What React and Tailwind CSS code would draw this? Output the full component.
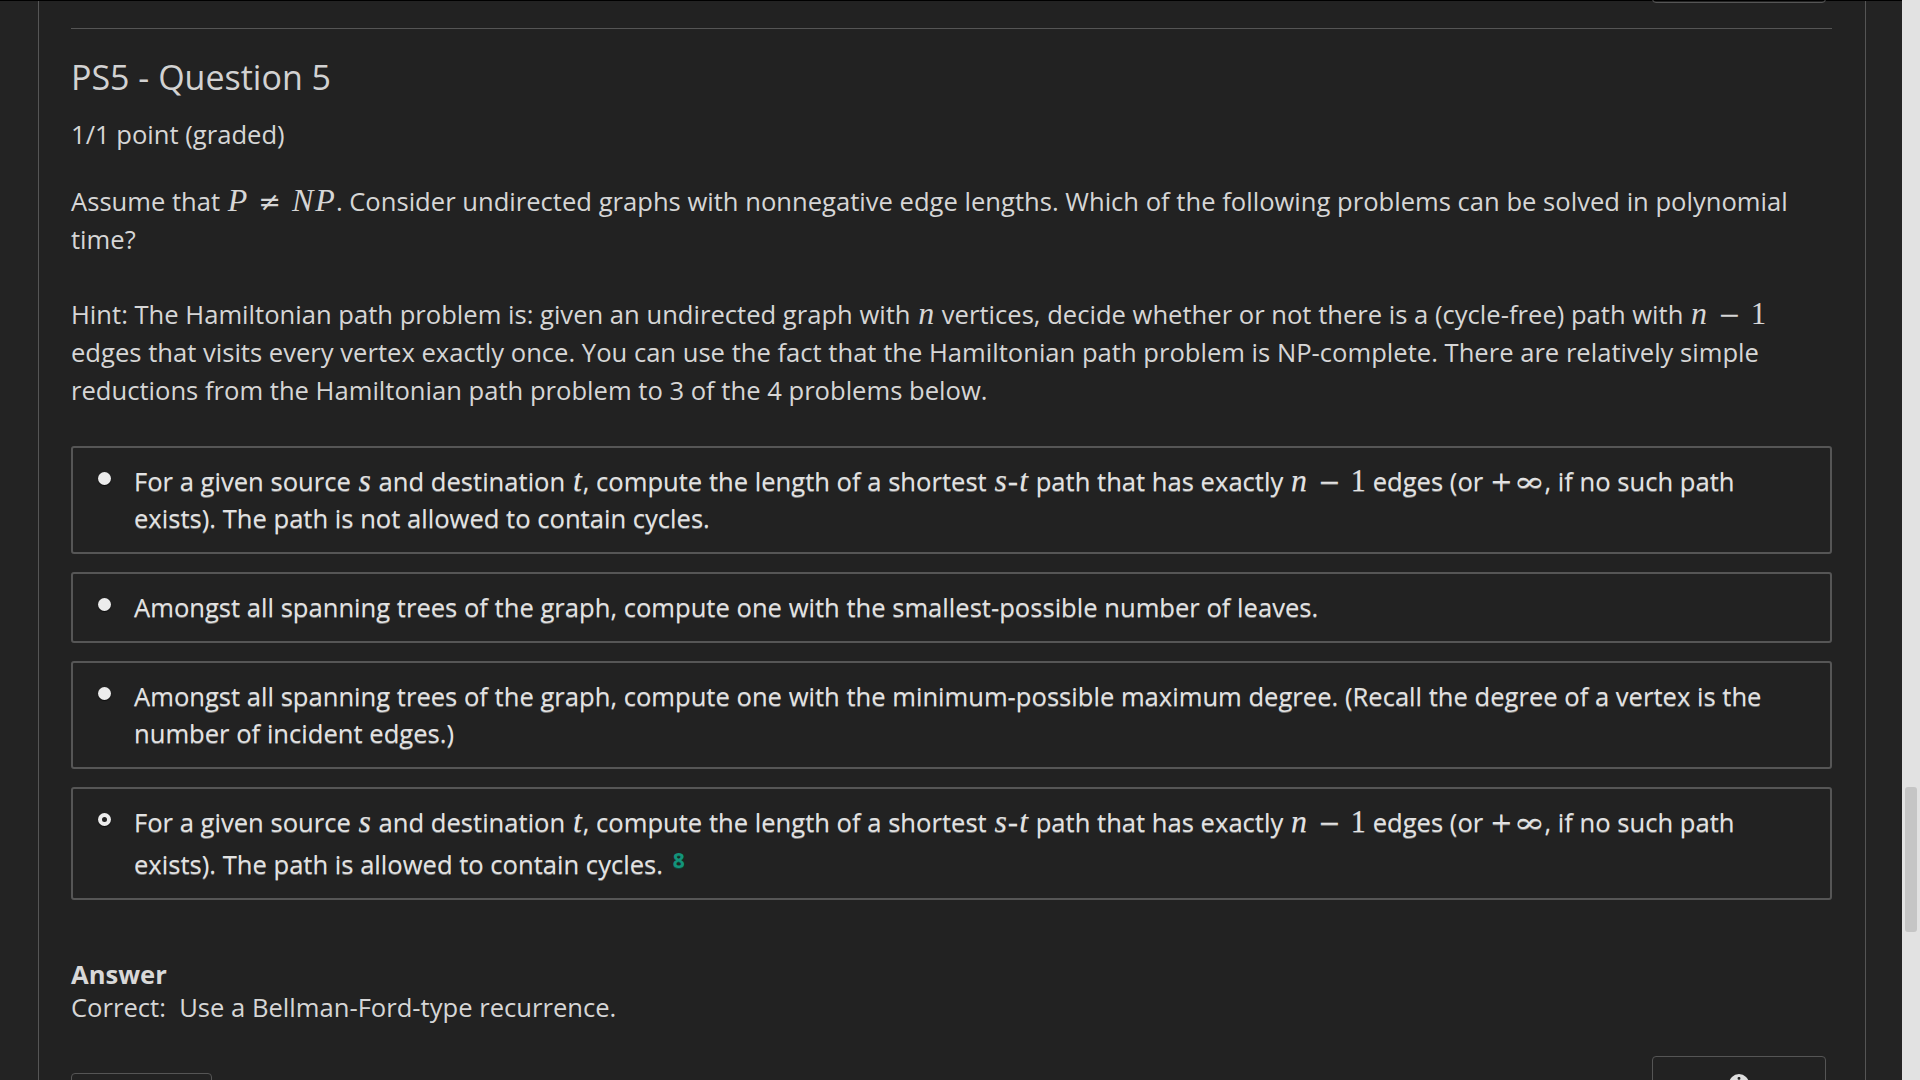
import clsx from 'clsx';

const serif = "font-['Liberation_Serif','DejaVu_Serif',serif]";
const opFont = "font-['DejaVu_Serif','Liberation_Serif',serif]";

// math italic letter(s)
function Mi({ children }) {
  return (
    <span className={clsx(serif, 'ml-[1px] -mr-[1px] italic text-[32px] leading-none tracking-[2px]')}>{children}</span>
  );
}

// upright math: digits and the hyphen
function Mu({ children }) {
  return <span className={clsx(serif, 'text-[31px] leading-none')}>{children}</span>;
}

function Op({ children, spaced }) {
  return (
    <span className={clsx(opFont, 'text-[27px] font-light leading-none', spaced && 'mx-[10px]')}>{children}</span>
  );
}

function PlusInf() {
  return (
    <span className={clsx(opFont, 'text-[27px] font-light leading-none')}>
      +<span className="ml-[1px] inline-block w-[31px] text-center">
        <span className="inline-block scale-x-[1.4]">∞</span>
      </span>
    </span>
  );
}

function Radio({ checked }) {
  return (
    <span className="mt-[9px] flex h-[13px] w-[13px] shrink-0 items-center justify-center rounded-full bg-[#ececec] shadow-[0_1px_1px_rgba(0,0,0,0.6)]">
      {checked && <span className="h-[5px] w-[5px] rounded-full bg-[#222]" />}
    </span>
  );
}

function Option({ checked, children }) {
  return (
    <div className="flex gap-[23px] rounded-[3px] border-2 border-[#565656] py-[15px] pl-[25px] pr-[24px]">
      <Radio checked={checked} />
      <div className="text-[25.6px] leading-[37px] text-[#e2e2e2] [text-shadow:0_1px_0_#7a7a7a]">{children}</div>
    </div>
  );
}

function ShortestPath() {
  return (
    <>
      For a given source <Mi>s</Mi> and destination <Mi>t</Mi>, compute the length of a shortest{' '}
      <Mi>s</Mi>
      <Mu>-</Mu>
      <Mi>t</Mi> path that has exactly <Mi>n</Mi>
      <Op spaced>−</Op>
      <Mu>1</Mu> edges (or <PlusInf />, if no such path exists).
    </>
  );
}

export default function App() {
  return (
    <div className="flex h-screen w-full overflow-hidden bg-[#222] font-['Open_Sans','Noto_Sans',sans-serif] text-[#d6d6d6]">
      <div className="flex-1 border-t border-black bg-[#232323]">
        <div className="ml-[38px] h-full w-[1828px] border-l border-r border-[#555] bg-[#222] pl-[32px] pr-[33px]">
          {/* button peeking in from the previous unit */}
          <div className="flex justify-end">
            <div className="-mt-[41px] mr-[6px] h-[43px] w-[174px] rounded-[4px] border border-[#555]" />
          </div>
          <div className="mt-[25px] border-t border-[#555]" />

          <h3 className="mt-[27px] text-[34px] font-normal leading-[42px] text-[#d2d2d2]">PS5 - Question 5</h3>
          <div className="mt-[18px] text-[25.6px] leading-[38px]">1/1 point (graded)</div>

          <p className="mt-[29px] text-[25.6px] leading-[38px]">
            Assume that <Mi>P</Mi>
            <Op spaced>≠</Op>
            <Mi>NP</Mi>. Consider undirected graphs with nonnegative edge lengths. Which of the following
            problems can be solved in polynomial time?
          </p>

          <p className="mt-[37px] text-[25.6px] leading-[38px]">
            Hint: The Hamiltonian path problem is: given an undirected graph with <Mi>n</Mi> vertices, decide
            whether or not there is a (cycle-free) path with <Mi>n</Mi>
            <Op spaced>−</Op>
            <Mu>1</Mu> edges that visits every vertex exactly once. You can use the fact that the Hamiltonian
            path problem is NP-complete. There are relatively simple reductions from the Hamiltonian path
            problem to 3 of the 4 problems below.
          </p>

          <div className="mt-[36px] flex flex-col gap-[18px]">
            <Option>
              <ShortestPath /> The path is not allowed to contain cycles.
            </Option>
            <Option>Amongst all spanning trees of the graph, compute one with the smallest-possible number of leaves.</Option>
            <Option>
              Amongst all spanning trees of the graph, compute one with the minimum-possible maximum degree.
              (Recall the degree of a vertex is the number of incident edges.)
            </Option>
            <Option checked>
              <ShortestPath /> The path is allowed to contain cycles.{' '}
              <span className="ml-[3px] align-[6px] text-[21px] font-bold leading-[38px] text-[#14937a] [text-shadow:0_1px_0_#0b4a3d]">
                8
              </span>
            </Option>
          </div>

          <div className="mt-[58px] text-[25.6px] leading-[33px]">
            <div className="font-bold text-[#d8d8d8]">Answer</div>
            <div>Correct:&nbsp; Use a Bellman-Ford-type recurrence.</div>
          </div>

          <div className="mt-[32px] flex items-start justify-between">
            <div className="mt-[17px] h-[44px] w-[141px] rounded-[4px] border border-[#555]" />
            <div className="mr-[6px] flex h-[44px] w-[174px] justify-center rounded-[4px] border border-[#555] pt-[16px]">
              <svg width="22" height="22" viewBox="0 0 22 22">
                <circle cx="11" cy="11" r="10" fill="#dedede" />
                <rect x="9.6" y="4" width="2.8" height="2.8" rx="1" fill="#222" />
                <rect x="9.6" y="8.5" width="2.8" height="9" fill="#222" />
              </svg>
            </div>
          </div>
        </div>
      </div>

      {/* page scrollbar */}
      <div className="w-[18px] shrink-0 bg-[#e2e2e2] pt-[787px]">
        <div className="mx-auto h-[145px] w-[12px] rounded-[3px] bg-[#c5c5c5]" />
      </div>
    </div>
  );
}
